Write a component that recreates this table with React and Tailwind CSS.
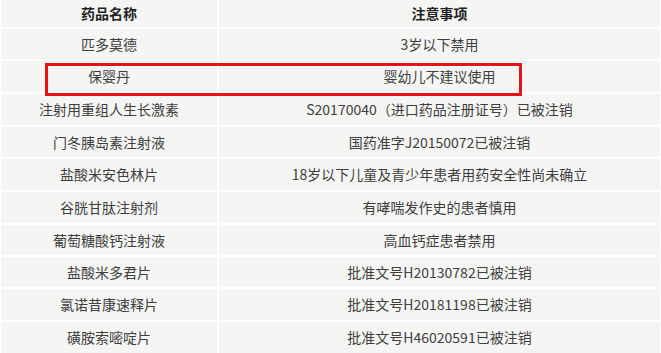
const rows = [
  ['匹多莫德', '3岁以下禁用'],
  ['保婴丹', '婴幼儿不建议使用'],
  ['注射用重组人生长激素', 'S20170040（进口药品注册证号）已被注销'],
  ['门冬胰岛素注射液', '国药准字J20150072已被注销'],
  ['盐酸米安色林片', '18岁以下儿童及青少年患者用药安全性尚未确立'],
  ['谷胱甘肽注射剂', '有哮喘发作史的患者慎用'],
  ['葡萄糖酸钙注射液', '高血钙症患者禁用'],
  ['盐酸米多君片', '批准文号H20130782已被注销'],
  ['氯诺昔康速释片', '批准文号H20181198已被注销'],
  ['磺胺索嘧啶片', '批准文号H46020591已被注销'],
]

const heights = ['h-[30px]', 'h-[31px]', 'h-[31px]', 'h-[30px]', 'h-[31px]', 'h-[31px]', 'h-[30px]', 'h-[30px]', 'h-[31px]', 'h-[31px]']

export default function App() {
  return (
    <div
      className="relative w-[661px] h-[353px] overflow-hidden bg-white text-[14px] text-[#3e3e3e]"
      style={{ fontFamily: '"Noto Sans CJK SC", "Noto Sans", sans-serif' }}
    >
      <div className="flex flex-col gap-[2px] pl-[1px] pr-[1px]">
        <div className="grid grid-cols-[216px_441px] gap-[2px] h-[27px]">
          <div className="bg-[#f5f5f3] flex items-center justify-center font-bold text-[#222]">药品名称</div>
          <div className="bg-[#f5f5f3] flex items-center justify-center font-bold text-[#222]">注意事项</div>
        </div>
        {rows.map(([name, note], i) => (
          <div key={name} className={`grid grid-cols-[216px_441px] gap-[2px] ${heights[i]}`}>
            <div className="bg-[#f5f5f3] flex items-center justify-center">{name}</div>
            <div className="bg-[#f5f5f3] flex items-center justify-center">{note}</div>
          </div>
        ))}
      </div>
      {/* highlight box */}
      <div className="absolute left-[45px] top-[63px] w-[477px] h-[33px] border-[3px] border-[#e5121c]" />
    </div>
  )
}
